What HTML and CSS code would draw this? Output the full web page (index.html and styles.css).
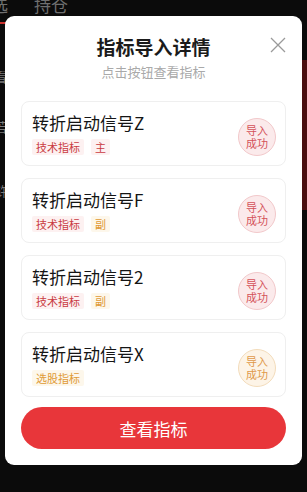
FILE: index.html
```html
<!DOCTYPE html>
<html lang="zh-CN">
<head>
<meta charset="utf-8">
<title>指标导入详情</title>
<link rel="stylesheet" href="styles.css">
</head>
<body>
<div class="bg">
  <div class="tabs"><span class="tab">自选</span><span class="tab">持仓</span></div>
  <div class="tab-bar"></div>
  <div class="bg-main">
    <div class="bg-left">
      <div class="stock"><span class="s-name">看</span><span class="s-code">3</span></div>
      <div class="stock"><span class="s-name">若</span><span class="s-code">9</span></div>
      <div class="stock stock-last"><span class="s-name">浒</span></div>
    </div>
    <div class="bg-right"></div>
  </div>
</div>

<div class="modal">
  <div class="header">
    <h1 class="title">指标导入详情</h1>
    <p class="subtitle">点击按钮查看指标</p>
  </div>
  <button class="close" aria-label="关闭">
    <svg width="16" height="16" viewBox="0 0 16 16"><path d="M1 1 L15 15 M15 1 L1 15" stroke="#9a9a9a" stroke-width="1.3" fill="none"/></svg>
  </button>

  <div class="list">
    <div class="card">
      <div class="info">
        <div class="name">转折启动信号Z</div>
        <div class="tags"><span class="tag red">技术指标</span><span class="tag red">主</span></div>
      </div>
      <div class="badge red">导入<br>成功</div>
    </div>
    <div class="card">
      <div class="info">
        <div class="name">转折启动信号F</div>
        <div class="tags"><span class="tag red">技术指标</span><span class="tag gold">副</span></div>
      </div>
      <div class="badge red">导入<br>成功</div>
    </div>
    <div class="card">
      <div class="info">
        <div class="name">转折启动信号2</div>
        <div class="tags"><span class="tag red">技术指标</span><span class="tag gold">副</span></div>
      </div>
      <div class="badge red">导入<br>成功</div>
    </div>
    <div class="card">
      <div class="info">
        <div class="name">转折启动信号X</div>
        <div class="tags"><span class="tag gold">选股指标</span></div>
      </div>
      <div class="badge gold">导入<br>成功</div>
    </div>
  </div>

  <button class="primary">查看指标</button>
</div>
</body>
</html>
```

FILE: styles.css
```css
* {
  box-sizing: border-box;
  margin: 0;
  padding: 0;
}

html, body {
  width: 307px;
  height: 492px;
}

body {
  margin: 0;
  background: #0b0b0b;
  font-family: "Noto Sans CJK SC", "Noto Sans", sans-serif;
  overflow: hidden;
  position: relative;
}

/* background page (behind the dialog) */
.bg {
  height: 100%;
  display: flex;
  flex-direction: column;
}

.tabs {
  display: flex;
  gap: 26px;
  margin-left: -26px;
  margin-top: -7px;
  font-size: 17px;
  line-height: 24px;
  color: #6f6f6f;
  white-space: nowrap;
}

.tab-bar {
  width: 6px;
  height: 2px;
  margin-top: 5px;
  background: #c9302c;
}

.bg-main {
  flex: 1;
  display: flex;
  justify-content: space-between;
}

.bg-left {
  display: flex;
  flex-direction: column;
  margin-left: -6px;
  padding-top: 45px;
}

.stock {
  height: 50px;
  display: flex;
  flex-direction: column;
}

.stock-last {
  padding-top: 14px;
}

.s-name {
  font-size: 13px;
  line-height: 16px;
  color: #7c7c7c;
}

.s-code {
  margin-top: 9px;
  font-size: 10px;
  line-height: 12px;
  color: #4e4e4e;
}

.bg-right {
  width: 6px;
  height: 150px;
  margin-top: 36px;
  background: #4a0f10;
}

/* dialog */
.modal {
  position: absolute;
  left: 5px;
  top: 16px;
  width: 297px;
  background: #fff;
  border-radius: 9px;
  padding: 19px 16px 16px;
}

.header {
  text-align: center;
}

.title {
  font-size: 19px;
  line-height: 24px;
  font-weight: 600;
  color: #1b1b1b;
}

.subtitle {
  margin-top: 4px;
  font-size: 13px;
  line-height: 18px;
  color: #a9a9a9;
}

.close {
  position: absolute;
  top: 21px;
  right: 16px;
  width: 16px;
  height: 16px;
  border: none;
  background: none;
  display: block;
}

.close svg {
  display: block;
}

.list {
  margin-top: 20px;
  display: flex;
  flex-direction: column;
  gap: 12px;
}

.card {
  height: 65px;
  border: 1px solid #efefef;
  border-radius: 8px;
  display: flex;
  align-items: center;
  justify-content: space-between;
  padding: 0 9px 0 10px;
}

.info {
  display: flex;
  flex-direction: column;
}

.name {
  font-size: 17px;
  line-height: 22px;
  font-weight: 400;
  color: #151515;
}

.tags {
  margin-top: 5px;
  display: flex;
  gap: 7px;
}

.tag {
  font-size: 11px;
  line-height: 16px;
  padding: 0 4px;
  border-radius: 2px;
}

.tag.red {
  color: #c93a41;
  background: #fdf1f1;
}

.tag.gold {
  color: #e09a35;
  background: #fdf7eb;
}

.badge {
  width: 38px;
  height: 38px;
  margin-top: 7px;
  border-radius: 50%;
  display: flex;
  align-items: center;
  justify-content: center;
  text-align: center;
  font-size: 11px;
  line-height: 13px;
}

.badge.red {
  border: 1px solid #f2c8ca;
  background: #fbeaeb;
  color: #d4525a;
}

.badge.gold {
  border: 1px solid #f3dcbb;
  background: #fdf4e7;
  color: #e0994a;
}

.primary {
  margin-top: 10px;
  width: 100%;
  height: 42px;
  border: none;
  border-radius: 21px;
  background: #e8363a;
  color: #fff;
  font-family: inherit;
  font-size: 17px;
  display: flex;
  align-items: center;
  justify-content: center;
}
```
